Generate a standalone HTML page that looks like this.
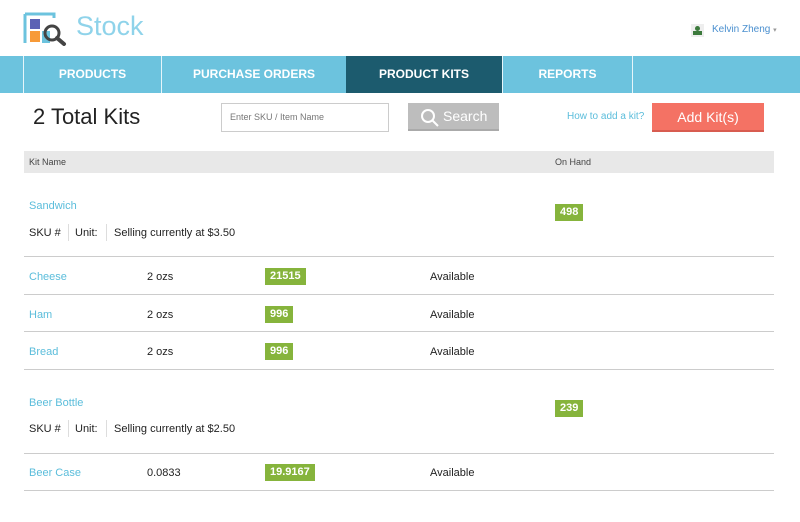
<!DOCTYPE html>
<html><head><style>
*{margin:0;padding:0;box-sizing:border-box}
body{width:800px;height:522px;background:#fff;font-family:"Liberation Sans",sans-serif;position:relative;overflow:hidden;color:#333}
.a{position:absolute;white-space:nowrap}
.nav{position:absolute;top:56px;left:0;width:800px;height:37px;background:#6cc3de}
.tab{position:absolute;top:0;height:37px;line-height:37px;text-align:center;color:#fff;font-weight:bold;font-size:12px;border-left:1px solid #e6f5fa}
.link{color:#5bbddb;font-size:11px}
.t{font-size:11px;color:#222}
.badge{position:absolute;background:#86b43c;color:#fff;font-size:11px;font-weight:bold;height:17px;line-height:17px;padding:0 5px}
.hr{position:absolute;left:24px;width:750px;height:1px;background:#ccc}
.sep{position:absolute;width:1px;height:17px;background:#ddd}
</style></head><body>
<svg class="a" style="left:23px;top:12px" width="46" height="34" viewBox="0 0 46 34">
<path d="M2 2H31V6M2 2V31" stroke="#6cc3de" stroke-width="3" fill="none"/>
<rect x="7" y="7" width="10" height="10" fill="#5b62b5"/>
<rect x="7" y="19" width="10" height="11" fill="#f79a38"/>
<rect x="19" y="19" width="8" height="12" fill="#6cc3de"/>
<circle cx="29" cy="21" r="7" stroke="#444" stroke-width="3" fill="none"/>
<path d="M34 26L41 32" stroke="#444" stroke-width="4" stroke-linecap="round"/>
</svg>
<div class="a" style="left:76px;top:11px;font-size:27px;color:#8fd3ea">Stock</div>
<div class="a" style="left:691px;top:24px;width:13px;height:13px;background:#eee"></div>
<div class="a" style="left:695px;top:26px;width:5px;height:5px;border-radius:50%;background:#3c7a3c"></div>
<div class="a" style="left:693px;top:31px;width:9px;height:4px;background:#3c7a3c"></div>
<div class="a" style="left:712px;top:24px;font-size:10px;color:#4a8fcf">Kelvin Zheng <span style="font-size:7px;color:#999">▾</span></div>
<div class="nav">
<div class="tab" style="left:23px;width:138px">PRODUCTS</div>
<div class="tab" style="left:161px;width:185px">PURCHASE ORDERS</div>
<div class="tab" style="left:346px;width:156px;background:#1c5b6e;border-left:none">PRODUCT KITS</div>
<div class="tab" style="left:502px;width:130px">REPORTS</div>
<div class="tab" style="left:632px;width:1px;padding:0"></div>
</div>
<div class="a" style="left:33px;top:104px;font-size:22px;color:#222">2 Total Kits</div>
<div class="a" style="left:221px;top:103px;width:168px;height:29px;border:1px solid #ccc;font-size:9px;color:#777;line-height:27px;padding-left:8px">Enter SKU / Item Name</div>
<div class="a" style="left:408px;top:103px;width:91px;height:28px;background:#bdbdbd;border-bottom:2px solid #aaa;color:#fff;font-size:14px;line-height:27px;padding-left:35px">Search</div>
<svg class="a" style="left:420px;top:108px" width="20" height="20"><circle cx="8" cy="8" r="6" stroke="#fff" stroke-width="2" fill="none"/><path d="M12.5 12.5L18 18" stroke="#fff" stroke-width="2"/></svg>
<div class="a link" style="left:567px;top:111px;font-size:10px">How to add a kit?</div>
<div class="a" style="left:652px;top:103px;width:112px;height:29px;background:#f47264;border-bottom:2px solid #d85c50;color:#fff;font-size:14px;line-height:28px;text-align:center">Add Kit(s)</div>
<div class="a" style="left:24px;top:151px;width:750px;height:22px;background:#e8e8e8"></div>
<div class="a" style="left:29px;top:157px;font-size:9px;color:#444">Kit Name</div>
<div class="a" style="left:555px;top:157px;font-size:9px;color:#444">On Hand</div>

<div class="a link" style="left:29px;top:200px">Sandwich</div>
<div class="badge" style="left:555px;top:204px">498</div>
<div class="a t" style="left:29px;top:227px">SKU #</div><div class="sep" style="left:68px;top:224px"></div>
<div class="a t" style="left:75px;top:227px">Unit:</div><div class="sep" style="left:106px;top:224px"></div>
<div class="a t" style="left:114px;top:227px">Selling currently at $3.50</div>
<div class="hr" style="top:256px"></div>
<div class="a link" style="left:29px;top:271px">Cheese</div><div class="a t" style="left:147px;top:271px">2 ozs</div><div class="badge" style="left:265px;top:268px">21515</div><div class="a t" style="left:430px;top:271px">Available</div>
<div class="hr" style="top:294px"></div>
<div class="a link" style="left:29px;top:309px">Ham</div><div class="a t" style="left:147px;top:309px">2 ozs</div><div class="badge" style="left:265px;top:306px">996</div><div class="a t" style="left:430px;top:309px">Available</div>
<div class="hr" style="top:331px"></div>
<div class="a link" style="left:29px;top:346px">Bread</div><div class="a t" style="left:147px;top:346px">2 ozs</div><div class="badge" style="left:265px;top:343px">996</div><div class="a t" style="left:430px;top:346px">Available</div>
<div class="hr" style="top:369px"></div>

<div class="a link" style="left:29px;top:397px">Beer Bottle</div>
<div class="badge" style="left:555px;top:400px">239</div>
<div class="a t" style="left:29px;top:423px">SKU #</div><div class="sep" style="left:68px;top:420px"></div>
<div class="a t" style="left:75px;top:423px">Unit:</div><div class="sep" style="left:106px;top:420px"></div>
<div class="a t" style="left:114px;top:423px">Selling currently at $2.50</div>
<div class="hr" style="top:453px"></div>
<div class="a link" style="left:29px;top:467px">Beer Case</div><div class="a t" style="left:147px;top:467px">0.0833</div><div class="badge" style="left:265px;top:464px">19.9167</div><div class="a t" style="left:430px;top:467px">Available</div>
<div class="hr" style="top:490px"></div>
</body></html>
